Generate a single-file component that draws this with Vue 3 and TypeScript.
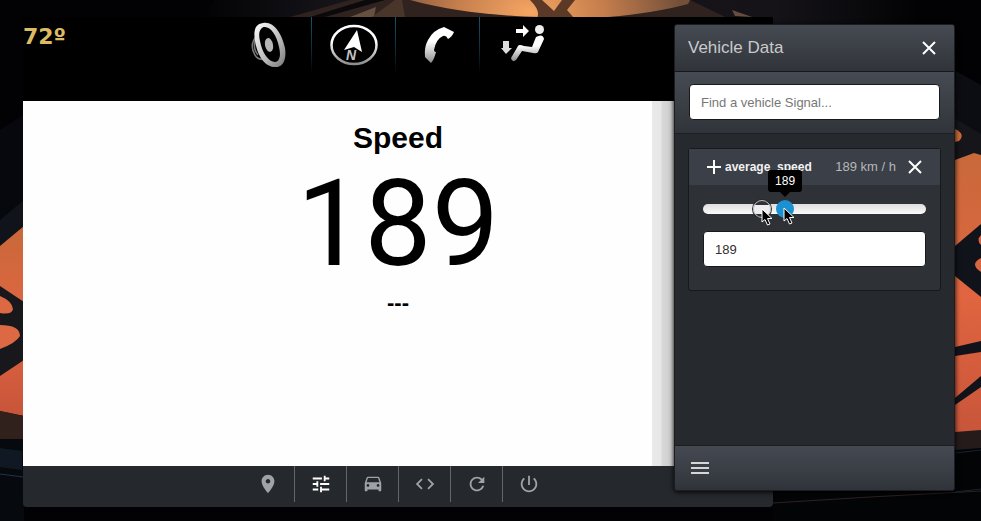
<script setup lang="ts">
import { computed, ref } from 'vue'

interface Tool {
  label: string
  path: string
  active?: boolean
}

const MAX_SPEED = 530
const speed = ref(189)
const query = ref('')
const ghost = 130

const position = (value: number) => `calc(9px + (100% - 18px) * ${value / MAX_SPEED})`
const thumbLeft = computed(() => position(speed.value))
const ghostLeft = position(ghost)

const tools: Tool[] = [
  { label: 'Location', path: 'M12 2C8.13 2 5 5.13 5 9c0 5.25 7 13 7 13s7-7.75 7-13c0-3.87-3.13-7-7-7zm0 9.5c-1.38 0-2.5-1.12-2.5-2.5s1.120-2.5 2.5-2.5 2.5 1.12 2.5 2.500-1.120 2.500-2.500 2.500z' },
  { label: 'Signals', active: true, path: 'M3 17v2h6v-2H3zM3 5v2h10V5H3zm10 16v-2h8v-2h-8v-2h-2v6h2zM7 9v2H3v2h4v2h2V9H7zm14 4v-2H11v2h10zm-6-4h2V7h4V5h-4V3h-2v6z' },
  { label: 'Vehicle', path: 'M18.92 5.010C18.720 4.420 18.160 4 17.500 4h-11c-.66 0-1.210.42-1.420 1.010L3 11v8c0 .55.45 1 1 1h1c.55 0 1-.45 1-1v-1h12v1c0 .55.45 1 1 1h1c.55 0 1-.45 1-1v-8l-2.080-5.990zM6.500 15c-.83 0-1.500-.67-1.500-1.500S5.670 12 6.500 12s1.500.67 1.500 1.500S7.330 15 6.500 15zm11 0c-.83 0-1.500-.67-1.500-1.500s.67-1.500 1.500-1.500 1.500.67 1.500 1.500-.67 1.500-1.500 1.500zM5 10l1.500-4.500h11L19 10H5z' },
  { label: 'Code', path: 'M9.400 16.600L4.800 12l4.600-4.600L8 6l-6 6 6 6 1.400-1.400zm5.200 0l4.600-4.600-4.600-4.600L16 6l6 6-6 6-1.400-1.400z' },
  { label: 'Reload', path: 'M17.650 6.350C16.200 4.900 14.210 4 12 4c-4.420 0-7.990 3.580-7.990 8s3.570 8 7.990 8c3.730 0 6.840-2.550 7.730-6h-2.080c-.82 2.330-3.040 4-5.650 4-3.310 0-6-2.690-6-6s2.690-6 6-6c1.660 0 3.140.69 4.220 1.780L13 11h7V4l-2.350 2.350z' },
  { label: 'Power', path: 'M13 3h-2v10h2V3zm4.830 2.170l-1.420 1.420C17.990 7.860 19 9.810 19 12c0 3.870-3.130 7-7 7s-7-3.130-7-7c0-2.190 1.010-4.140 2.580-5.420L6.170 5.170C4.230 6.820 3 9.260 3 12c0 4.970 4.030 9 9 9s9-4.030 9-9c0-2.740-1.230-5.180-3.170-6.830z' },
]
</script>

<template>
  <div class="page">
    <svg class="backdrop" viewBox="0 0 981 521" preserveAspectRatio="none" aria-hidden="true">
      <defs>
        <linearGradient id="ember" x1="0" y1="0" x2="0" y2="1">
          <stop offset="0" stop-color="#c8693a" />
          <stop offset="0.500" stop-color="#e06540" />
          <stop offset="1" stop-color="#c8553a" />
        </linearGradient>
        <radialGradient id="glow" gradientUnits="userSpaceOnUse" cx="530" cy="12" r="150" gradientTransform="matrix(1 0 0 .6 0 5)">
          <stop offset="0" stop-color="#f6a663" />
          <stop offset="0.500" stop-color="#c47d4c" />
          <stop offset="1" stop-color="#74503a" />
        </radialGradient>
        <linearGradient id="dusk" x1="0" y1="0" x2="1" y2="0">
          <stop offset="0" stop-color="#020204" />
          <stop offset="0.200" stop-color="#17151a" />
          <stop offset="0.800" stop-color="#151318" />
          <stop offset="1" stop-color="#020204" />
        </linearGradient>
      </defs>
      <rect width="981" height="521" fill="#020204" />
      <path d="M215 0H920V26H200Z" fill="url(#dusk)" />
      <path d="M290 17L350 0H690L740 24 700 18Z" fill="#30231f" />
      <path d="M310 17L365 0H385L325 17Z" fill="#0b090b" />
      <path d="M350 17L376 7 374 17Z" fill="#665040" />
      <path d="M395 0L372 17H405L402 0Z" fill="#49352a" />
      <path d="M410 0H690L688 4Q655 13 608 17H540Q465 15 410 0Z" fill="url(#glow)" />
      <path d="M530 0H542L554 11 562 0H575L567 10 574 18H537Q541 11 530 0Z" fill="#5b3926" />
      <path d="M732 10L752 17 735 16Z" fill="#684c43" />
      <path d="M0 130L24 115V415H0Z" fill="#11131a" />
      <path d="M0 130L24 115V200L0 220Z" fill="#07080d" />
      <path d="M0 246L24 226V416L0 411Z" fill="url(#ember)" />
      <path d="M0 286L24 302V360L0 376Z" fill="#17171c" />
      <path d="M0 296Q12 301 13 309Q12 315 0 313ZM0 325Q20 325 20 336Q16 343 0 349Z" fill="#dc6844" />
      <path d="M0 411L24 416V439H0Z" fill="#30211d" />
      <path d="M0 439H24V521H0Z" fill="#06090e" />
      <path d="M0 448L22 451V470L0 467Z" fill="#101923" />
      <path d="M0 474L23 477" stroke="#223447" />
      <path d="M954 70L981 85V155L954 145Z" fill="#0c0d12" />
      <path d="M954 118L981 134V160L954 160Z" fill="#15151a" />
      <path d="M955 129Q966 134 959 141L955 142Z" fill="#c86936" />
      <path d="M955 160L974 153 981 155V435L955 432Z" fill="url(#ember)" />
      <path d="M955 246L981 224V297L955 276Z" fill="#11131b" />
      <path d="M981 235Q976 240 981 245ZM981 258Q969 264 981 272Z" fill="#d96541" />
      <path d="M955 347L981 341V352L955 356ZM955 398L981 376V387L955 405Z" fill="#11131b" />
      <path d="M955 432L981 430V448L955 450Z" fill="#251b1b" />
      <path d="M955 450H981V521H773V492H955Z" fill="#030406" />
      <path d="M773 503L870 497 981 491" fill="none" stroke="#302020" />
      <path d="M955 453L981 450M955 492L981 489" stroke="#142435" />
    </svg>

    <main class="unit">
      <header class="status">
        <div class="temperature">72º</div>
        <nav class="shortcuts" aria-label="Car functions">
          <button type="button" aria-label="Audio">
            <svg viewBox="0 0 48 48">
              <defs>
                <linearGradient id="metal" x1="0" y1="0" x2="1" y2="1">
                  <stop offset="0" stop-color="#ffffff" />
                  <stop offset="0.600" stop-color="#b8b8b8" />
                  <stop offset="1" stop-color="#777777" />
                </linearGradient>
                <linearGradient id="silver" x1="0" y1="0" x2="0" y2="1">
                  <stop offset="0.400" stop-color="#ffffff" />
                  <stop offset="1" stop-color="#8d8d8d" />
                </linearGradient>
              </defs>
              <path d="M11 16Q4 24 10 34Q13 39 18 38M11 18Q7 27 13 34" fill="none" stroke="#777" stroke-width="1.500" />
              <path fill-rule="evenodd" d="M18 2C29 0 37 13 40 27C42 40 37 47 29 46C18 45 12 32 10 20C8 8 11 3 18 2ZM19 6C15 7 13 12 15 20C17 32 24 41 30 41C35 40 36 34 34 26C32 14 25 5 19 6Z" fill="url(#metal)" />
              <ellipse cx="24" cy="24" rx="4" ry="7" transform="rotate(-12 24 24)" fill="#b5b5b5" />
            </svg>
          </button>
          <button type="button" aria-label="Navigation">
            <svg viewBox="0 0 48 48">
              <ellipse cx="24" cy="24" rx="22.500" ry="19" fill="none" stroke="url(#silver)" stroke-width="2.500" />
              <path d="M27 9L32 31 24 26 14 29Z" fill="#fff" />
              <text x="16" y="39" class="north">N</text>
            </svg>
          </button>
          <button type="button" aria-label="Phone">
            <svg viewBox="0 0 48 48">
              <path d="M30 6L40 11Q38 16 34 18Q32 14 29 15Q22 18 20 29Q20 31 22 31Q20 39 17 42L11 36Q10 26 14 19Q19 9 30 6Z" fill="url(#silver)" />
            </svg>
          </button>
          <button type="button" aria-label="Climate">
            <svg viewBox="0 0 48 48">
              <circle cx="41.500" cy="8.500" r="4.500" fill="#eee" />
              <path d="M38 16Q45 12 46 18L40 31Q39 33 35 32L24 30 18 39Q14 42 13 37L20 25Q21 23 26 25L34 26Z" fill="url(#silver)" />
              <path d="M18 8H25V4L31 10 25 16V12H18Z" fill="#fff" />
              <path d="M5 20H11V27H14L8 33 3 27H5Z" fill="#ddd" />
            </svg>
          </button>
        </nav>
      </header>

      <section class="screen">
        <h1>Speed</h1>
        <output class="reading">{{ speed }}</output>
        <p>---</p>
      </section>

      <nav class="toolbar" aria-label="Tools">
        <button v-for="tool in tools" :key="tool.label" type="button" :aria-label="tool.label" :class="{ active: tool.active }">
          <svg viewBox="0 0 24 24"><path :d="tool.path" /></svg>
        </button>
      </nav>
    </main>

    <aside class="panel">
      <header class="panel-head">
        <h2>Vehicle Data</h2>
        <button type="button" class="icon-button" aria-label="Close panel">
          <svg viewBox="0 0 20 20"><path d="M4 4L16 16M16 4L4 16" /></svg>
        </button>
      </header>

      <div class="search">
        <input v-model="query" type="text" aria-label="Find a vehicle signal" placeholder="Find a vehicle Signal..." />
      </div>

      <div class="signals">
        <article class="card">
          <header class="card-head">
            <button type="button" class="icon-button" aria-label="Add signal">
              <svg viewBox="0 0 20 20"><path d="M10 3V17M3 10H17" /></svg>
            </button>
            <label for="speed-value">average_speed</label>
            <span class="unit-value">{{ speed }} km / h</span>
            <button type="button" class="icon-button" aria-label="Remove signal">
              <svg viewBox="0 0 20 20"><path d="M4 4L16 16M16 4L4 16" /></svg>
            </button>
          </header>
          <div class="card-body">
            <div class="slider">
              <input v-model.number="speed" type="range" min="0" :max="MAX_SPEED" aria-label="Average speed" />
              <span class="ghost" :style="{ left: ghostLeft }">
                <svg class="pointer" viewBox="0 0 12 18"><path d="M1 1V14L4 11.500 6.500 17 9 16 6.500 10.500H11Z" /></svg>
              </span>
              <span class="marker" :style="{ left: thumbLeft }">
                <span class="tip">{{ speed }}</span>
                <svg class="pointer" viewBox="0 0 12 18"><path d="M1 1V14L4 11.500 6.500 17 9 16 6.500 10.500H11Z" /></svg>
              </span>
            </div>
            <input id="speed-value" v-model.number="speed" class="value" type="text" />
          </div>
        </article>
      </div>

      <footer class="panel-foot">
        <button type="button" class="icon-button menu" aria-label="Menu">
          <svg viewBox="0 0 20 20"><path d="M1 5H19M1 10H19M1 15H19" /></svg>
        </button>
      </footer>
    </aside>
  </div>
</template>

<style>
body {
  margin: 0;
  background: #020204;
}
</style>

<style scoped>
.page,
.page * {
  box-sizing: border-box;
}

.page {
  position: relative;
  min-height: 100vh;
  padding: 17px 23px 14px;
  display: flex;
  overflow: hidden;
  font-family: "Liberation Sans", Arial, sans-serif;
}

.backdrop {
  position: absolute;
  inset: 0;
  width: 100%;
  height: 100%;
}

button {
  display: flex;
  align-items: center;
  justify-content: center;
  margin: 0;
  padding: 0;
  border: 0;
  background: none;
  cursor: pointer;
}

.unit {
  position: relative;
  flex: 0 1 750px;
  display: flex;
  flex-direction: column;
}

.status {
  height: 84px;
  display: grid;
  grid-template-columns: 1fr auto 1fr;
  background: #000;
}

.temperature {
  padding-top: 7px;
  font-family: "DejaVu Sans", sans-serif;
  font-size: 22px;
  font-weight: bold;
  line-height: 26px;
  color: #dcbb62;
}

.shortcuts {
  display: flex;
  height: 56px;
  padding-right: 6px;
}

.shortcuts button {
  width: 84px;
}

.shortcuts button + button {
  border-left: 1px solid;
  border-image: linear-gradient(#14566b, #0a2b38 60%, #000) 1;
}

.shortcuts svg {
  width: 48px;
  height: 48px;
}

.north {
  font: italic bold 14px "Liberation Sans", Arial, sans-serif;
  fill: #c4c4c4;
}

.screen {
  flex: 1;
  padding-top: 19px;
  display: flex;
  flex-direction: column;
  align-items: center;
  background: linear-gradient(to right, #fefefe 629px, #eaeaea 629px, #e6e6e6 638px, #d8d8d8 639px, #cacaca 651px);
  color: #000;
}

.screen h1 {
  margin: 0;
  font-size: 30px;
  line-height: 36px;
}

.reading {
  margin-top: 8px;
  font-family: Roboto, "Liberation Sans", sans-serif;
  font-size: 120px;
  line-height: 120px;
}

.screen p {
  margin: 7px 0 0;
  font-size: 22px;
  font-weight: bold;
  line-height: 24px;
}

.toolbar {
  height: 41px;
  display: flex;
  justify-content: center;
  background: #25282d;
  border-radius: 0 0 4px 4px;
}

.toolbar button {
  width: 52px;
  height: 36px;
}

.toolbar button + button {
  border-left: 1px solid #63666b;
}

.toolbar svg {
  width: 22px;
  height: 22px;
  fill: #a0a2a5;
}

.toolbar .active svg {
  fill: #fff;
}

.panel {
  position: absolute;
  top: 24px;
  right: 26px;
  bottom: 30px;
  width: 281px;
  display: flex;
  flex-direction: column;
  background: #26292e;
  border: 1px solid #1b1d21;
  border-radius: 3px;
  overflow: hidden;
  box-shadow: 0 1px 5px #000;
}

.panel-head {
  height: 47px;
  padding: 0 15px 0 13px;
  display: flex;
  align-items: center;
  justify-content: space-between;
  background: linear-gradient(#464a52, #30343a);
  border-bottom: 1px solid #15171a;
}

.panel-head h2 {
  margin: 0;
  font-size: 17px;
  font-weight: normal;
  line-height: 20px;
  color: #c8cacd;
}

.icon-button svg {
  display: block;
  width: 20px;
  height: 20px;
  fill: none;
  stroke: #fff;
  stroke-width: 2;
}

.menu svg {
  stroke: #d5d6d8;
}

.search {
  padding: 12px 14px 13px;
  background: linear-gradient(#464a52, #30343a);
  border-bottom: 1px solid #1c1e22;
}

.search input,
.value {
  display: block;
  width: 100%;
  height: 36px;
  padding: 0 11px;
  border: 1px solid #17191c;
  border-radius: 4px;
  background: #fff;
  font: 13px "Liberation Sans", Arial, sans-serif;
  color: #303030;
}

.search input::placeholder {
  color: #777;
  opacity: 1;
}

.signals {
  flex: 1;
  padding: 14px 13px;
}

.card {
  background: #2e3136;
  border: 1px solid #17191c;
  border-radius: 3px;
}

.card-head {
  height: 36px;
  padding: 0 15px;
  display: flex;
  align-items: center;
  background: #3b3f47;
  font-size: 13px;
  line-height: 16px;
}

.card-head label {
  font-size: 12px;
  font-weight: bold;
  color: #f2f2f2;
  padding-left: 1px;
}

.unit-value {
  margin-left: auto;
  margin-right: 9px;
  color: #b5b7ba;
}

.card-body {
  padding: 14px 14px 23px;
}

.slider {
  position: relative;
  height: 20px;
  margin-bottom: 12px;
}

.slider input {
  appearance: none;
  display: block;
  width: 100%;
  height: 20px;
  margin: 0;
  background: none;
}

.slider input::-webkit-slider-runnable-track {
  height: 10px;
  border-radius: 5px;
  background: linear-gradient(#dedede, #fafafa);
}

.slider input::-webkit-slider-thumb {
  appearance: none;
  width: 18px;
  height: 18px;
  margin-top: -4px;
  border-radius: 50%;
  background: #1b91d2;
}

.ghost,
.marker {
  position: absolute;
  top: 1px;
  width: 18px;
  height: 18px;
  margin-left: -9px;
  border-radius: 50%;
  pointer-events: none;
}

.ghost {
  background: linear-gradient(#2e3136 4px, #eee 4px, #eee 13px, #2e3136 13px);
  border: 1px solid #bbb;
  box-shadow: 0 0 0 1px #25282c;
}

.pointer {
  position: absolute;
  left: 7px;
  top: 7px;
  width: 12px;
  height: 18px;
}

.pointer path {
  fill: #000;
  stroke: #fff;
  stroke-width: 1;
}

.tip {
  position: absolute;
  left: 50%;
  bottom: 26px;
  padding: 3px 7px;
  transform: translateX(-50%);
  border-radius: 3px;
  background: #000;
  color: #fff;
  font-size: 12px;
  line-height: 16px;
}

.tip::after {
  content: "";
  position: absolute;
  left: 50%;
  top: 100%;
  margin-left: -5px;
  border: 5px solid transparent;
  border-bottom: 0;
  border-top-color: #000;
}

.panel-foot {
  height: 45px;
  padding: 0 15px;
  display: flex;
  align-items: center;
  background: linear-gradient(#454952, #30343a);
  border-top: 1px solid #1b1d20;
}
</style>
